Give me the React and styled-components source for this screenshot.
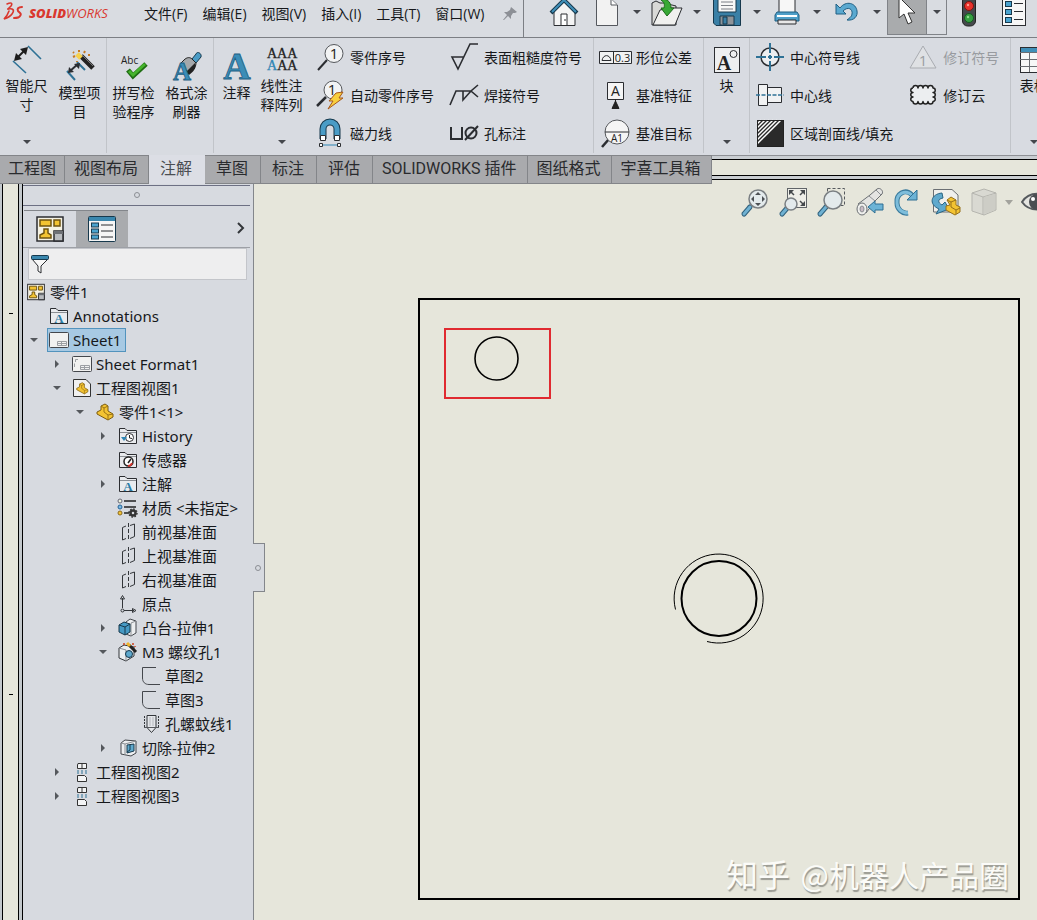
import React from 'react'
import styled, { createGlobalStyle } from 'styled-components'

const INK = '#2b2d31'
const BLUE = '#3f8fb8'
const DEEP = '#1f5f83'
const GOLD = '#f3c332'
const SERIF = 'Liberation Serif, serif'
const SANS = 'Open Sans, sans-serif'

// ---------- title bar icons ----------

const Swoosh = () => (
  <Svg width='22' height='20' viewBox='0 0 22 20' fill='none' stroke='#d9382f' strokeLinecap='round'>
    <path d='M3 1C7-1 9 0 7 3L4 6' strokeWidth='1.600' />
    <path d='M4 6C9 5 11 7 8 11C6 14 3 15 0 16C3 13 4 11 5 8' strokeWidth='1.600' />
    <path d='M18 4C14 4 13 6 14 8C16 10 18 11 16 13C15 15 13 15 10 15' strokeWidth='2' />
  </Svg>
)
const PinIcon = () => (
  <Svg width='14' height='14' viewBox='0 0 14 14'>
    <path d='M8 0l6 5l-2 1l-2 0l-2 3l0 3l-3-3l-4 4l-1 0l4-5l-3-3l3 0l3-2z' fill='#8d9096' />
  </Svg>
)
const HomeIcon = () => (
  <Svg width='28' height='28' viewBox='0 0 28 28'>
    <path d='M4 12L14 2L25 12V25.500H4z' fill='#f4f4f4' stroke={INK} />
    <path d='M1 13L14 0L27 13' fill='none' stroke='#17394d' strokeWidth='4' />
    <path d='M2 12L14 0L26 12' fill='none' stroke={BLUE} strokeWidth='2' />
    <path d='M11 25V14h6v11' fill='#fff' stroke={INK} />
    <path d='M15 19v2' stroke={INK} />
  </Svg>
)
const NewIcon = () => (
  <Svg width='28' height='28' viewBox='0 0 28 28'>
    <path d='M3.500 -4V25.500H24.500V5L18 -1z' fill='#f2f2f2' stroke='#55585e' />
    <path d='M18 -1V5H24' fill='#fff' stroke='#55585e' />
  </Svg>
)
const OpenIcon = () => (
  <Svg width='32' height='28' viewBox='0 0 32 28'>
    <path d='M1 25V3L5 1L9 3H13L25 6V25z' fill='#d9d9d7' stroke={INK} />
    <path d='M2 25L9 10L18 8H31L24 25z' fill='#f1f1ef' stroke={INK} />
    <path d='M10 0C15-2 20 1 20 8H23L16 16L10 8H13C14 4 13 2 10 0z' fill='#39a935' stroke='#1d6a1b' />
  </Svg>
)
const SaveIcon = () => (
  <Svg width='28' height='28' viewBox='0 0 28 28'>
    <path d='M.5 -4H27.500V25.500H3L.5 23z' fill='#3a80a6' stroke='#17394d' />
    <path d='M5 -3H23V12H5z' fill='#f7f7f7' stroke='#17394d' />
    <path d='M8 2H20M8 5.500H20M8 9H20' stroke='#7b7f86' />
    <path d='M7 16H21V25H7z' fill='#8f9499' stroke='#17394d' />
    <path d='M10 17H14V24H10z' fill='#3a80a6' stroke='#17394d' />
  </Svg>
)
const PrintIcon = () => (
  <Svg width='26' height='28' viewBox='0 0 26 28'>
    <path d='M5 -2H21V13H5z' fill='#f7f7f7' stroke={INK} />
    <path d='M3 12H23L25 15V21H1V15z' fill='#4f9fc8' stroke={DEEP} />
    <path d='M3 16H23' stroke='#fff' strokeWidth='2' />
    <path d='M4 20H22V24H4z' fill='#e8e8e8' stroke={INK} />
  </Svg>
)
const UndoIcon = () => (
  <Svg width='24' height='28' viewBox='0 0 24 28'>
    <path d='M1 4V14H11L8 11C13 6 18 9 17 14C17 17 14 18 12 20C19 21 23 16 22 11C21 3 11 0 5 8z' fill='#5aa9d0' stroke={DEEP} />
  </Svg>
)
const CursorIcon = () => (
  <Svg width='20' height='28' viewBox='0 0 20 28'>
    <path d='M2 -3V18L7 14L11 24L15 22L11 13H18z' fill='#fff' stroke='#333' />
  </Svg>
)
const TrafficIcon = () => (
  <Svg width='14' height='28' viewBox='0 0 14 28'>
    <rect x='.5' y='-4' width='13' height='30' rx='5' fill='#45494c' stroke='#222' />
    <circle cx='7' cy='6' r='4.500' fill='#e8322b' stroke='#7d1410' />
    <circle cx='7' cy='18' r='4.500' fill='#36a042' stroke='#155a1e' />
    <circle cx='6' cy='5' r='1.200' fill='#ff9b8c' />
    <circle cx='6' cy='17' r='1.200' fill='#8fe08f' />
  </Svg>
)
const OptionsIcon = () => (
  <Svg width='24' height='28' viewBox='0 0 24 28'>
    <rect x='.5' y='-4' width='23' height='29.500' fill='#f7f7f7' stroke={INK} />
    {[1.5, 9.5, 17.5].map(y => (
      <g key={y}>
        <rect x='3.500' y={y} width='6' height='5' fill='#4aa3cf' stroke='#17394d' />
        <path d={`M12 ${y + 2}h9`} stroke={INK} />
      </g>
    ))}
  </Svg>
)

// ---------- ribbon icons ----------

const SmartDimIcon = () => (
  <Svg width='30' height='30' viewBox='0 0 30 30' fill='none'>
    <path d='M16 2L29 15M1 17L14 29' stroke='#2f7296' strokeWidth='1.600' />
    <path d='M4 15L14 5' stroke='#1d1d1d' strokeWidth='2' />
    <path d='M2 17L4 9L10 15zM16 3L8 5L14 11z' fill='#1d1d1d' />
  </Svg>
)
const ModelItemsIcon = () => (
  <Svg width='30' height='30' viewBox='0 0 30 30' fill='none'>
    <path d='M12 11L20 19M2 20L10 29' stroke='#2f7296' strokeWidth='2' />
    <path d='M5 20L13 13' stroke={INK} strokeWidth='2' />
    <path d='M3 22L4 16L9 21zM15 12L9 13L14 18z' fill={INK} />
    <path d='M16 5L28 17' stroke='#222' strokeWidth='5' />
    <path d='M17 4L28 15' stroke='#777' strokeWidth='1' />
    <path d='M12 3L16 7' stroke='#f6d04a' strokeWidth='5' />
    <path d='M14 -1v2M20 0l-1 2M8 1l1 1M8 6l2-1M23 4h2M12 11v-1' stroke='#c87a20' strokeWidth='2' />
  </Svg>
)
const SpellIcon = () => (
  <Svg width='30' height='30' viewBox='0 0 30 30'>
    <text x='2' y='13' fontFamily={SANS} fontSize='10' fill='#222'>Abc</text>
    <path d='M9 19L14 25L27 13' fill='none' stroke='#1f6d12' strokeWidth='5' />
    <path d='M10 20L14 24L26 13' fill='none' stroke='#45b32c' strokeWidth='3' />
  </Svg>
)
const PainterIcon = () => (
  <Svg width='30' height='30' viewBox='0 0 30 30'>
    <path d='M20 8L24 3C25 0 30 2 29 6L24 12z' fill='#4a9cc6' stroke='#17394d' />
    <path d='M12 9C15 6 18 6 20 8L24 12C24 17 20 20 17 22L8 13z' fill='#a5a8ab' stroke='#222' />
    <path d='M14 21L23 12C25 17 21 21 17 24z' fill='#222' />
    <text x='1' y='29' fontFamily={SERIF} fontSize='25' fontWeight='bold' fill='#3b8db7' stroke={DEEP} strokeWidth='.8'>A</text>
  </Svg>
)
const NoteIcon = () => (
  <Svg width='30' height='30' viewBox='0 0 30 30'>
    <text x='15' y='28' textAnchor='middle' fontFamily={SERIF} fontSize='38' fontWeight='bold' fill='#3b8db7' stroke={DEEP} strokeWidth='.8'>A</text>
  </Svg>
)
const PatternIcon = () => (
  <Svg width='30' height='30' viewBox='0 0 30 30' fontFamily={SERIF} fontSize='14' fill='#222' stroke='#222' strokeWidth='.3'>
    <text x='0' y='14'>AAA</text>
    <text x='0' y='26'><tspan fill='#2f86b5' stroke='#2f86b5'>A</tspan>AA</text>
  </Svg>
)
const BalloonIcon = () => (
  <Svg width='28' height='28' viewBox='0 0 28 28'>
    <path d='M11 17L2 27' stroke={INK} strokeWidth='2' />
    <circle cx='18' cy='10.500' r='9' fill='#f2f3f4' stroke='#55585c' />
    <text x='18' y='16' textAnchor='middle' fontFamily={SANS} fontSize='15' fill='#222'>1</text>
  </Svg>
)
const AutoBalloonIcon = () => (
  <Svg width='28' height='28' viewBox='0 0 28 28'>
    <path d='M10 16L1 25' stroke={INK} strokeWidth='2.500' />
    <circle cx='17' cy='9' r='9' fill='#f2f3f4' stroke='#55585c' />
    <text x='16' y='14' textAnchor='middle' fontFamily={SANS} fontSize='15' fill='#222'>1</text>
    <path d='M20 12L27 11L23 17L27 17L12 28L17 20L13 20z' fill='#f8cf3d' stroke='#a8581c' />
  </Svg>
)
const MagnetIcon = () => (
  <Svg width='28' height='28' viewBox='0 0 28 28' fill='none'>
    <path d='M7 20V10a7 7 0 0 1 14 0V20' stroke='#17394d' strokeWidth='7' />
    <path d='M7 19V10a7 7 0 0 1 14 0V19' stroke='#4a9cc6' strokeWidth='5' />
    <path d='M4.500 16.500h5v5h-5zM18.500 16.500h5v5h-5z' fill='#fff' stroke={INK} />
    <path d='M5 26H23' stroke='#2f86b5' />
    <path d='M3.500 24.500h3v3h-3zM21.500 24.500h3v3h-3z' fill='#fff' stroke={INK} />
  </Svg>
)
const SurfaceIcon = () => (
  <Svg width='28' height='28' viewBox='0 0 28 28' fill='none' stroke={INK} strokeWidth='1.600'>
    <path d='M14 14H2L8 26L20 1H28' />
  </Svg>
)
const WeldIcon = () => (
  <Svg width='28' height='28' viewBox='0 0 28 28' fill='none' stroke={INK} strokeWidth='1.600'>
    <path d='M0 24L6 10H22M28 4L21 10L28 16M13 10V19L21 10' />
  </Svg>
)
const HoleIcon = () => (
  <Svg width='28' height='28' viewBox='0 0 28 28' fill='none' stroke={INK} strokeWidth='2'>
    <path d='M1 8V20H12V8M15 21L28 7' />
    <circle cx='21' cy='14' r='5.500' />
  </Svg>
)
const ToleranceIcon = () => (
  <Svg width='30' height='28' viewBox='0 0 30 28'>
    <path d='M-.5 8.500H31.500V20.500H-.5zM13.500 8.500V20.500' fill='#f1f2f3' stroke={INK} />
    <path d='M2 17.500H11C10 11 3 11 2 17.500z' fill='none' stroke={INK} />
    <text x='22.500' y='18.500' textAnchor='middle' fontFamily={SANS} fontSize='11' fill='#222'>0.3</text>
  </Svg>
)
const DatumIcon = () => (
  <Svg width='30' height='28' viewBox='0 0 30 28'>
    <path d='M7.500 1.500H23.500V18.500H7.500z' fill='#f5f5f5' stroke={INK} />
    <text x='15.500' y='15' textAnchor='middle' fontFamily={SANS} fontSize='14' fill='#222'>A</text>
    <path d='M15.500 18V21M15.500 20L12 27.500H19z' fill='#222' stroke='#222' />
  </Svg>
)
const TargetIcon = () => (
  <Svg width='30' height='28' viewBox='0 0 30 28'>
    <path d='M9 20L2 28' stroke={INK} strokeWidth='2.500' />
    <circle cx='17' cy='13' r='12' fill='#f5f5f5' stroke='#55585c' />
    <path d='M5 13H29' stroke={INK} />
    <text x='17' y='23' textAnchor='middle' fontFamily={SANS} fontSize='10' fill='#222'>A1</text>
  </Svg>
)
const BlockIcon = () => (
  <Svg width='28' height='30' viewBox='0 0 28 30'>
    <rect x='1.500' y='3.500' width='25' height='25' fill='#eeeff0' stroke={INK} />
    <text x='11' y='26' textAnchor='middle' fontFamily={SERIF} fontSize='20' fontWeight='bold' fill='#222'>A</text>
    <circle cx='20.500' cy='10' r='3.500' fill='none' stroke={INK} />
  </Svg>
)
const CenterMarkIcon = () => (
  <Svg width='28' height='28' viewBox='0 0 28 28' fill='none'>
    <circle cx='14' cy='14' r='9' fill='#eceef0' stroke={INK} strokeWidth='1.500' />
    <path d='M14 0V10M14 18V28M0 14H10M18 14H28M12 14H16M14 12V16' stroke='#2f7296' strokeWidth='2' />
  </Svg>
)
const CenterLineIcon = () => (
  <Svg width='28' height='28' viewBox='0 0 28 28'>
    <path d='M2.500 3.500H11.500V24.500H2.500zM11.500 6.500H25.500V21.500H11.500z' fill='#f1f2f3' stroke={INK} />
    <path d='M0 14H28' stroke='#2f7296' strokeWidth='1.500' strokeDasharray='4 1.500' />
  </Svg>
)
const HatchIcon = () => (
  <Svg width='28' height='28' viewBox='0 0 28 28'>
    <rect x='1' y='1' width='27' height='27' fill='#2a2a2a' />
    <path d='M1 5L5 1M1 9L9 1M1 13L13 1M1 17L17 1M1 21L21 1M1 25L25 1' stroke='#fff' strokeWidth='1.500' />
    <rect x='1.500' y='1.500' width='26' height='26' fill='none' stroke='#222' />
  </Svg>
)
const RevSymbolIcon = () => (
  <Svg width='28' height='28' viewBox='0 0 28 28'>
    <path d='M14 3L27 25H1z' fill='#dfe1e4' stroke='#a9acb1' />
    <text x='14' y='23' textAnchor='middle' fontFamily={SANS} fontSize='15' fill='#9b9ea3'>1</text>
  </Svg>
)
const CloudIcon = () => (
  <Svg width='28' height='28' viewBox='0 0 28 28'>
    <path
      d={'M4 7' + 'a2.500 2.500 0 0 1 5 0'.repeat(4) + 'a2 2 0 0 1 0 4.500'.repeat(3) + 'a2.500 2.500 0 0 1 -5 0'.repeat(4) + 'a2 2 0 0 1 0 -4.500'.repeat(3)}
      fill='#eceef0' stroke='#222' strokeWidth='1.500' strokeLinejoin='round'
    />
  </Svg>
)
const TableIcon = () => (
  <Svg width='28' height='30' viewBox='0 0 28 30'>
    <rect x='.5' y='3.500' width='27' height='25' fill='#f7f7f7' stroke={INK} />
    <rect x='1' y='4' width='26' height='4' fill='#3f8fb8' />
    <path d='M0 8.500H28M0 15.500H28M0 22.500H28M9.500 8V28M18.500 8V28' stroke='#6b6e73' />
  </Svg>
)

// ---------- view toolbar icons ----------

const Lens = ({ x, y, r }) => (
  <g>
    <path d={`M${x - r + 1} ${y + r - 1}L9 19`} stroke='#7a7f83' strokeWidth='2' />
    <path d='M9 19L3 26' stroke='#2e5f7b' strokeWidth='5' strokeLinecap='round' />
    <path d='M9 19L3 26' stroke='#6fb1d2' strokeWidth='3' strokeLinecap='round' />
    <circle cx={x} cy={y} r={r} fill='#e3eaec' stroke='#7a7f83' strokeWidth='1.500' />
  </g>
)
const ZoomPanIcon = () => (
  <Svg width='28' height='28' viewBox='0 0 28 28'>
    <Lens x={17} y={11} r={9} />
    <path d='M17 4l3 3h-6zM17 18l3-3h-6zM10 11l3-3v6zM24 11l-3-3v6z' fill='#4c5054' />
  </Svg>
)
const ZoomFitIcon = () => (
  <Svg width='28' height='28' viewBox='0 0 28 28'>
    <rect x='8.500' y='.5' width='19' height='19' fill='#eeeee8' stroke='#606468' />
    <path d='M11 3L15 7M25 3L21 7M25 17L21 13' stroke='#44484c' strokeWidth='1.500' />
    <path d='M10 2h5l-5 5zM26 2h-5l5 5zM26 18h-5l5-5z' fill='#44484c' />
    <Lens x={12} y={16} r={6} />
  </Svg>
)
const ZoomAreaIcon = () => (
  <Svg width='28' height='28' viewBox='0 0 28 28'>
    <rect x='10.500' y='.5' width='17' height='17' fill='none' stroke='#55595d' strokeDasharray='3 2' />
    <Lens x={16} y={12} r={9} />
  </Svg>
)
const PrevViewIcon = () => (
  <Svg width='30' height='28' viewBox='0 0 30 28'>
    <path d='M3 16L15 7L22 1C25-1 29 3 27 6L20 13L11 25z' fill='#e4e4e2' stroke='#6b6f73' />
    <path d='M14 8L20 13M21 2L26 7' stroke='#8b8f93' />
    <ellipse cx='7' cy='21' rx='5' ry='6' fill='#efefed' stroke='#6b6f73' />
    <ellipse cx='7' cy='21' rx='2' ry='3' fill='#c8b9c4' stroke='#8b8f93' />
    <path d='M13 19L20 13V16H28V22H20V25z' fill='#6cb3d6' stroke='#2e6f93' />
  </Svg>
)
const RotateIcon = () => (
  <Svg width='26' height='28' viewBox='0 0 26 28' fill='none'>
    <path d='M19 7C12 0 3 6 4 15C4 21 9 26 15 25' stroke='#3a7b9d' strokeWidth='5' />
    <path d='M20 8C12 0 3 6 4 15C4 21 9 25 15 25' stroke='#7dbddb' strokeWidth='3' />
    <path d='M24 2V12H14z' fill='#6cb3d6' stroke='#2e6f93' />
  </Svg>
)
const UpdateViewIcon = () => (
  <Svg width='30' height='28' viewBox='0 0 30 28'>
    <path d='M2.500 1.500H21L27 7V24H2.500z' fill='#efefec' stroke='#6b6f73' />
    <path d='M11 5C0 6-3 16 8 21L5 26L18 21L14 14L11 17C7 15 6 11 12 10z' fill='#5fa9cd' stroke='#2b6584' />
    <path d='M16 12L20 9L25 12V17L29 19V24L24 27L15 22V18L19 17z' fill={GOLD} stroke='#96701a' />
    <path d='M20 14V19L25 22L29 20M25 22V26M16 12L20 14L25 12' fill='none' stroke='#96701a' />
  </Svg>
)
const CubeIcon = () => (
  <Svg width='28' height='28' viewBox='0 0 28 28'>
    <path d='M3 5L15 1L27 5V22L15 27L3 23z' fill='#d9d9d2' stroke='#b5b5af' />
    <path d='M3 5L14 9L27 5M14 9V27' fill='none' stroke='#b5b5af' />
    <path d='M15 9L26 6V22L15 26z' fill='#cdcdc6' />
  </Svg>
)
const EyeIcon = () => (
  <Svg width='32' height='28' viewBox='0 0 32 28'>
    <path d='M1 14C8 3 24 3 31 14C24 24 8 24 1 14z' fill='#e4e4e0' stroke='#55595d' strokeWidth='2' />
    <circle cx='16' cy='14' r='8' fill='#4a4d51' />
    <circle cx='12' cy='11' r='2' fill='#fff' />
  </Svg>
)

// ---------- feature tree icons ----------

const DrawingGlyph = ({ size = 18 }) => (
  <Svg width={size} height={size} viewBox='0 0 28 26'>
    <rect x='1' y='1' width='26' height='24' fill='#f5f2e4' stroke={INK} strokeWidth='1.500' />
    <path d='M4 4H15V10H4zM18 4H24V10H18zM8 13H12V17L15 19V22H4V19L8 17z' fill={GOLD} stroke='#6d5310' strokeWidth='1.500' />
    <path d='M18 25V15H27V25z' fill='#b9bcc0' stroke={INK} strokeWidth='1.500' />
    <path d='M18 16.500H27' stroke='#6d7075' strokeWidth='3' />
  </Svg>
)
const PropertyGlyph = () => (
  <Svg width='28' height='26' viewBox='0 0 28 26'>
    <rect x='.5' y='.5' width='27' height='25' rx='1' fill='#f5f5f5' stroke='#17394d' />
    <rect x='1' y='1' width='26' height='4' fill='#3a87ae' />
    {[7, 13, 19].map(y => (
      <g key={y}>
        <rect x='3.500' y={y} width='7' height='4' fill='#4aa3cf' stroke='#17394d' />
        <path d={`M13 ${y + 2}h12`} stroke={INK} />
      </g>
    ))}
  </Svg>
)
const FunnelIcon = () => (
  <Svg width='18' height='19' viewBox='0 0 18 19'>
    <path d='M1 4L7 11V16L10 18V11L17 4z' fill='#f7f7f7' stroke={INK} />
    <rect x='.5' y='.5' width='17' height='4' rx='1' fill='#3a87ae' stroke='#17394d' />
  </Svg>
)
const Folder = ({ children }) => (
  <Svg width='18' height='18' viewBox='0 0 18 18'>
    <path d='M.5 16.500V1.500H6L8 3.500H17.500V16.500z' fill='#e9ebee' stroke={INK} />
    <path d='M1 5.500H17' stroke='#8b8f94' />
    {children}
  </Svg>
)
const AnnotationGlyph = () => (
  <Folder><text x='9' y='15.500' textAnchor='middle' fontFamily={SERIF} fontSize='13' fontWeight='bold' fill='#2b7ca6'>A</text></Folder>
)
const HistoryGlyph = () => (
  <Folder>
    <circle cx='10.500' cy='10.500' r='4' fill='#fff' stroke='#2b2d31' />
    <path d='M10.500 8V11L13 11.500' fill='none' stroke='#222' />
    <path d='M2 10h6l-3 4z' fill='#2f86b5' />
  </Folder>
)
const SensorGlyph = () => (
  <Folder>
    <circle cx='9.500' cy='10.500' r='4.500' fill='#fff' stroke='#222' strokeWidth='1.500' />
    <path d='M9 12L12 8' stroke='#222' strokeWidth='1.500' />
    <path d='M9 15a4.500 4.500 0 0 0 4-3' fill='none' stroke='#d2332b' strokeWidth='2' />
  </Folder>
)
const SheetGlyph = () => (
  <Svg width='20' height='18' viewBox='0 0 20 18'>
    <rect x='.5' y='1.500' width='19' height='15' rx='1' fill='#f1f1f0' stroke='#44474c' />
    <path d='M8.500 14.500V10.500H17.500V14.500zM8.500 12.500H17M12.500 10.500V14' fill='none' stroke='#9c9fa3' />
  </Svg>
)
const FormatGlyph = () => (
  <Svg width='20' height='18' viewBox='0 0 20 18'>
    <rect x='.5' y='1.500' width='19' height='15' rx='1' fill='#f1f1f0' stroke='#44474c' />
    <path d='M3.500 7V4.500H6M2.500 12V8.500M8.500 14.500V10.500H17.500V14.500zM8.500 12.500H17M12.500 10.500V14' fill='none' stroke='#9c9fa3' />
  </Svg>
)
const PartShape = () => (
  <g>
    <path d='M1 9L5 7V3L9 1L12 3V8L17 11V14L12 17L1 11z' fill={GOLD} stroke='#7c5c10' />
    <path d='M5 3L8 5L12 3M8 5V9L12 12L17 11M12 12V17' fill='none' stroke='#9c7515' />
  </g>
)
const PartGlyph = () => (
  <Svg width='18' height='18' viewBox='0 0 18 18'><PartShape /></Svg>
)
const ViewGlyph = () => (
  <Svg width='18' height='18' viewBox='0 0 18 18'>
    <path d='M.5 .5H13L17.500 5V17.500H.5z' fill='#f1f1f0' stroke='#333' />
    <g transform='translate(3 3) scale(.7)'><PartShape /></g>
  </Svg>
)
const MaterialGlyph = () => (
  <Svg width='20' height='18' viewBox='0 0 20 18'>
    <path d='M6 2H18M6 8H18M6 14H11' stroke='#222' strokeWidth='1.500' />
    <circle cx='2' cy='2' r='2' fill='#eef3dc' stroke='#667' />
    <circle cx='2' cy='8' r='2' fill='#7cb9e0' stroke='#24649a' />
    <circle cx='2' cy='14' r='2' fill={GOLD} stroke='#8a6a20' />
    <circle cx='15' cy='14' r='2.500' fill='none' stroke='#333' strokeWidth='2.500' />
    <circle cx='15' cy='14' r='4' fill='none' stroke='#333' strokeWidth='1.500' strokeDasharray='1.500 1.600' />
  </Svg>
)
const PlaneGlyph = () => (
  <Svg width='18' height='18' viewBox='0 0 18 18' fill='none' stroke='#33363a'>
    <path d='M7 3L3.500 4.500V17L7 15.500M11 2.500L15.500 1V13.500L11 15.500' />
    <path d='M9.500 0V18' strokeDasharray='4 2' />
  </Svg>
)
const OriginGlyph = () => (
  <Svg width='18' height='18' viewBox='0 0 18 18' fill='none' stroke='#33363a'>
    <path d='M3.500 3V13M5 15.500H15M1.500 4L3.500 .5L5.500 4zM13.500 13.500L17 15.500L13.500 17.500z' />
    <circle cx='3.500' cy='15.500' r='1.500' />
  </Svg>
)
const BossGlyph = () => (
  <Svg width='20' height='18' viewBox='0 0 20 18'>
    <path d='M8 3L12 0L18 2V14L13 17L8 15z' fill='#eceef0' stroke='#44474c' />
    <path d='M13 4V17M13 4L18 2' stroke='#8b8f94' />
    <path d='M1 6L6 3L12 5V13L7 16L1 13z' fill='#4599c4' stroke='#17394d' />
    <path d='M1 6L7 8L12 5M7 8V16' fill='none' stroke='#17394d' />
  </Svg>
)
const HoleWizGlyph = () => (
  <Svg width='20' height='18' viewBox='0 0 20 18'>
    <path d='M1 5L6 2L16 4V13L8 18L1 15z' fill='#eceef0' stroke='#33363a' />
    <path d='M1 5L8 7V18' fill='none' stroke='#8b8f94' />
    <circle cx='11' cy='11' r='3.500' fill='#5fa9cd' stroke='#17394d' />
    <path d='M11 2L18 9' stroke='#222' strokeWidth='3' />
    <path d='M9 0L12 3' stroke='#f0b52c' strokeWidth='3' />
    <path d='M14 1h2M6 0v2M17 3v1' stroke='#d0401e' strokeWidth='1.500' />
  </Svg>
)
const SketchGlyph = () => (
  <Svg width='18' height='18' viewBox='0 0 18 18' fill='none' stroke='#44474c'>
    <path d='M14 .5H.5V11C.5 15 3 17.500 7 17.500H18' />
  </Svg>
)
const ThreadGlyph = () => (
  <Svg width='18' height='18' viewBox='0 0 18 18' fill='none' stroke='#33363a'>
    <path d='M5 .5H14V12.500H5zM5 12.500L9.500 17.500L14 12.500' fill='#e4e6ea' />
    <path d='M2.500 1V12M16.500 1V12' strokeDasharray='2 1' />
    <path d='M2 12.500H17' stroke='#55585d' />
    <path d='M8 2V11M11 2V11' stroke='#b5b8bd' />
  </Svg>
)
const CutGlyph = () => (
  <Svg width='18' height='18' viewBox='0 0 18 18'>
    <path d='M2 4L6 1L17 2V14L12 17L2 15z' fill='#eceef0' stroke='#44474c' />
    <path d='M2 4L6 5V16M6 5L17 2' fill='none' stroke='#8b8f94' />
    <path d='M8 6L15 5V12L8 14z' fill='#5fa9cd' stroke='#17394d' />
    <path d='M11 6V11L8 13' fill='none' stroke='#17394d' />
  </Svg>
)
const ProjectedGlyph = () => (
  <Svg width='18' height='18' viewBox='0 0 18 18' fill='#f3f4f5' stroke='#333'>
    <path d='M5 .5H13.500V5.500H4.500V2zM9 .5V5M4.500 12.500H11.500L13.500 14.500V18.500H4.500z' />
    <path d='M4 8H6M8 8H10M12 8H14M4 10H6M8 10H10M12 10H14' stroke='#2f7296' />
  </Svg>
)

const Caret = () => (
  <Svg width='8' height='4' viewBox='0 0 8 4'><path d='M0 0H8L4 4z' fill='#44474c' /></Svg>
)
const Twisty = ({ open }) => (
  <Svg width='10' height='10' viewBox='0 0 10 10'>
    <path d={open ? 'M1 3H9L5 7z' : 'M3 1V9L7 5z'} fill='#55585d' />
  </Svg>
)

// ---------- data ----------

const menus = ['文件(F)', '编辑(E)', '视图(V)', '插入(I)', '工具(T)', '窗口(W)']

const quick = [
  { name: '新建', icon: NewIcon },
  { name: '打开', icon: OpenIcon },
  { name: '保存', icon: SaveIcon },
  { name: '打印', icon: PrintIcon },
  { name: '撤销', icon: UndoIcon }
]

const tabs = ['工程图', '视图布局', '注解', '草图', '标注', '评估', 'SOLIDWORKS 插件', '图纸格式', '宇喜工具箱']

const tree = [
  { level: 0, icon: DrawingGlyph, label: '零件1' },
  { level: 1, icon: AnnotationGlyph, label: 'Annotations' },
  { level: 1, icon: SheetGlyph, label: 'Sheet1', open: true, selected: true },
  { level: 2, icon: FormatGlyph, label: 'Sheet Format1', open: false },
  { level: 2, icon: ViewGlyph, label: '工程图视图1', open: true },
  { level: 3, icon: PartGlyph, label: '零件1<1>', open: true },
  { level: 4, icon: HistoryGlyph, label: 'History', open: false },
  { level: 4, icon: SensorGlyph, label: '传感器' },
  { level: 4, icon: AnnotationGlyph, label: '注解', open: false },
  { level: 4, icon: MaterialGlyph, label: '材质 <未指定>' },
  { level: 4, icon: PlaneGlyph, label: '前视基准面' },
  { level: 4, icon: PlaneGlyph, label: '上视基准面' },
  { level: 4, icon: PlaneGlyph, label: '右视基准面' },
  { level: 4, icon: OriginGlyph, label: '原点' },
  { level: 4, icon: BossGlyph, label: '凸台-拉伸1', open: false },
  { level: 4, icon: HoleWizGlyph, label: 'M3 螺纹孔1', open: true },
  { level: 5, icon: SketchGlyph, label: '草图2' },
  { level: 5, icon: SketchGlyph, label: '草图3' },
  { level: 5, icon: ThreadGlyph, label: '孔螺蚊线1' },
  { level: 4, icon: CutGlyph, label: '切除-拉伸2', open: false },
  { level: 2, icon: ProjectedGlyph, label: '工程图视图2', open: false },
  { level: 2, icon: ProjectedGlyph, label: '工程图视图3', open: false }
]

// ---------- parts ----------

const Big = ({ icon: Icon, lines, caret, narrow }) => (
  <BigButton type='button' $high={caret} $narrow={narrow}>
    <Icon />
    <BigLabel>{lines.map(line => <span key={line}>{line}</span>)}</BigLabel>
    {caret && <CaretSlot><Caret /></CaretSlot>}
  </BigButton>
)

const Small = ({ icon: Icon, wide, disabled, children }) => (
  <SmallButton type='button' disabled={disabled}>
    <IconSlot $wide={wide}><Icon /></IconSlot>
    {children}
  </SmallButton>
)

const TitleBar = () => (
  <Title>
    <MenuArea>
      <Logo><Swoosh /><Brand><b>SOLID</b>WORKS</Brand></Logo>
      <Menu>
        {menus.map(m => <MenuItem type='button' key={m}>{m}</MenuItem>)}
      </Menu>
      <PinIcon />
    </MenuArea>
    <Quick>
      <QuickButton type='button' aria-label='主页' $w={46}><HomeIcon /></QuickButton>
      {quick.map(({ name, icon: Icon }) => (
        <React.Fragment key={name}>
          <QuickButton type='button' aria-label={name} $w={40}><Icon /></QuickButton>
          <QuickCaret type='button' aria-label={`${name}选项`}><Caret /></QuickCaret>
        </React.Fragment>
      ))}
      <QuickButton type='button' aria-label='选择' $w={40} $pressed><CursorIcon /></QuickButton>
      <QuickCaret type='button' aria-label='选择选项' $framed><Caret /></QuickCaret>
      <QuickButton type='button' aria-label='重建模型' $w={44}><TrafficIcon /></QuickButton>
      <QuickButton type='button' aria-label='选项' $w={46}><OptionsIcon /></QuickButton>
    </Quick>
  </Title>
)

const Ribbon = () => (
  <RibbonBar>
    <Group>
      <Big icon={SmartDimIcon} lines={['智能尺', '寸']} caret />
      <Big icon={ModelItemsIcon} lines={['模型项', '目']} />
    </Group>
    <Group>
      <Big icon={SpellIcon} lines={['拼写检', '验程序']} />
      <Big icon={PainterIcon} lines={['格式涂', '刷器']} />
    </Group>
    <Group>
      <Big icon={NoteIcon} lines={['注释']} narrow />
      <Big icon={PatternIcon} lines={['线性注', '释阵列']} caret narrow />
      <Stacks>
        <Stack>
          <Small icon={BalloonIcon}>零件序号</Small>
          <Small icon={AutoBalloonIcon}>自动零件序号</Small>
          <Small icon={MagnetIcon}>磁力线</Small>
        </Stack>
        <Stack>
          <Small icon={SurfaceIcon}>表面粗糙度符号</Small>
          <Small icon={WeldIcon}>焊接符号</Small>
          <Small icon={HoleIcon}>孔标注</Small>
        </Stack>
      </Stacks>
    </Group>
    <Group>
      <Stacks>
        <Stack>
          <Small icon={ToleranceIcon} wide>形位公差</Small>
          <Small icon={DatumIcon} wide>基准特征</Small>
          <Small icon={TargetIcon} wide>基准目标</Small>
        </Stack>
      </Stacks>
    </Group>
    <Group>
      <Big icon={BlockIcon} lines={['块']} caret narrow />
    </Group>
    <Group>
      <Stacks>
        <Stack>
          <Small icon={CenterMarkIcon}>中心符号线</Small>
          <Small icon={CenterLineIcon}>中心线</Small>
          <Small icon={HatchIcon}>区域剖面线/填充</Small>
        </Stack>
        <Stack>
          <Small icon={RevSymbolIcon} disabled>修订符号</Small>
          <Small icon={CloudIcon}>修订云</Small>
        </Stack>
      </Stacks>
    </Group>
    <Group>
      <Big icon={TableIcon} lines={['表格']} caret narrow />
    </Group>
  </RibbonBar>
)

const FeaturePanel = () => (
  <Panel>
    <Grip><Dot /></Grip>
    <PanelTabs>
      <PanelTab type='button' aria-label='FeatureManager'><DrawingGlyph size={28} /></PanelTab>
      <PanelTab type='button' aria-label='PropertyManager' $active><PropertyGlyph /></PanelTab>
      <Expand type='button' aria-label='展开'>
        <Svg width='8' height='12' viewBox='0 0 8 12'><path d='M1 1L6 6L1 11' fill='none' stroke='#33363a' strokeWidth='2' /></Svg>
      </Expand>
    </PanelTabs>
    <Filter>
      <FunnelIcon />
      <FilterInput type='text' aria-label='过滤器' />
    </Filter>
    <Tree>
      {tree.map(({ level, icon: Icon, label, open, selected }, i) => (
        <Row key={i} $level={level}>
          {level > 0 && <Arrow>{open !== undefined && <Twisty open={open} />}</Arrow>}
          <Node type='button' $selected={selected}>
            <NodeIcon><Icon /></NodeIcon>
            {label}
          </Node>
        </Row>
      ))}
    </Tree>
    <SideHandle><Dot /></SideHandle>
  </Panel>
)

const DrawingArea = () => (
  <Canvas>
    <ViewTools>
      <ToolButton type='button' aria-label='平移缩放'><ZoomPanIcon /></ToolButton>
      <ToolButton type='button' aria-label='整屏显示全图'><ZoomFitIcon /></ToolButton>
      <ToolButton type='button' aria-label='局部放大'><ZoomAreaIcon /></ToolButton>
      <ToolButton type='button' aria-label='上一视图'><PrevViewIcon /></ToolButton>
      <ToolButton type='button' aria-label='旋转视图'><RotateIcon /></ToolButton>
      <ToolButton type='button' aria-label='更新视图'><UpdateViewIcon /></ToolButton>
      <ToolButton type='button' aria-label='显示样式'><CubeIcon /></ToolButton>
      <StyleCaret><Svg width='8' height='5' viewBox='0 0 8 5'><path d='M0 0H8L4 5z' fill='#a3a39d' /></Svg></StyleCaret>
      <ToolButton type='button' aria-label='隐藏/显示项目' $clip><EyeIcon /></ToolButton>
    </ViewTools>
    <Sheet viewBox='0 0 602 602' fill='none' stroke='#000'>
      <rect x='1' y='1' width='600' height='600' strokeWidth='2' />
      <rect x='27' y='31' width='105' height='69' stroke='#e02a30' strokeWidth='2' />
      <circle cx='78.500' cy='60.500' r='21.500' strokeWidth='1.600' />
      <circle cx='301' cy='300.500' r='37.500' strokeWidth='2' />
      <path d='M257.500 311.500A44.500 44.500 0 1 1 289 343.500' />
    </Sheet>
    <Watermark><span>知乎</span> @机器人产品圈</Watermark>
  </Canvas>
)

class App extends React.Component {
  constructor (props) {
    super(props)
    this.state = { tab: '注解' }
  }
  render () {
    const { tab } = this.state
    return (
      <Page>
        <GlobalStyle />
        <TitleBar />
        <Ribbon />
        <TabLine>
          <Tabs role='tablist'>
            {tabs.map(t => (
              <Tab
                type='button' role='tab' key={t}
                aria-selected={t === tab} $active={t === tab}
                onClick={() => { this.setState({ tab: t }) }}
              >
                {t}
              </Tab>
            ))}
          </Tabs>
          <TopRuler><RulerBand /></TopRuler>
        </TabLine>
        <Main>
          <SideRuler><Tick /><Tick /></SideRuler>
          <FeaturePanel />
          <DrawingArea />
        </Main>
      </Page>
    )
  }
}

// ---------- styles ----------

const GlobalStyle = createGlobalStyle`
  * {
    box-sizing: border-box;
  }
  body {
    margin: 0;
    color: #16181b;
    background-color: #e6e6db;
    font-family: 'Open Sans', 'Noto Sans CJK SC', sans-serif;
    font-size: 14px;
  }
  button, input {
    margin: 0;
    padding: 0;
    border: 0;
    background: none;
    color: inherit;
    font: inherit;
  }
`
const Svg = styled.svg`
  display: block;
  flex: none;
  overflow: visible;
`
const Page = styled.div`
  display: flex;
  flex-direction: column;
  min-height: 100vh;
  overflow: hidden;
`
const Title = styled.header`
  display: flex;
  height: 38px;
  overflow: hidden;
  background-color: #d9dce1;
  border-bottom: 1px solid #7c7f84;
`
const MenuArea = styled.div`
  display: flex;
  flex: none;
  align-items: center;
  width: 524px;
  padding: 0 6px 10px 4px;
  border-right: 1px solid #7c7f84;
`
const Logo = styled.div`
  display: flex;
  align-items: center;
  gap: 3px;
  width: 140px;
  height: 22px;
  padding-bottom: 2px;
`
const Brand = styled.span`
  color: #d9382f;
  font-size: 13px;
  font-style: italic;
  line-height: 18px;

  b {
    font-weight: 800;
  }
`
const Menu = styled.nav`
  display: flex;
  flex: 1;
  gap: 15px;
`
const MenuItem = styled.button`
  line-height: 20px;
  white-space: nowrap;
`
const Quick = styled.div`
  display: flex;
  flex: 1;
  padding-left: 17px;
`
const QuickButton = styled.button`
  display: flex;
  flex: none;
  justify-content: center;
  width: ${p => p.$w}px;
  height: 35px;
  ${p => p.$pressed && `
    background-color: #a9abad;
    border: 1px solid #808388;
    border-top: 0;
  `}
`
const QuickCaret = styled.button`
  display: flex;
  flex: none;
  justify-content: center;
  width: 20px;
  height: 35px;
  padding-top: 10px;
  ${p => p.$framed && `
    border: 1px solid #808388;
    border-width: 0 1px 1px 0;
  `}
`
const RibbonBar = styled.div`
  display: flex;
  height: 117px;
  overflow: hidden;
  background-color: #d8dbe1;
`
const Group = styled.div`
  display: flex;
  flex: none;
  margin-bottom: 2px;
  border-right: 1px solid #c1c4c9;
`
const BigButton = styled.button`
  display: flex;
  flex-direction: column;
  align-items: center;
  width: ${p => p.$narrow ? 45 : 53}px;
  padding-top: ${p => p.$high ? 6 : 13}px;
  padding-bottom: 9px;
`
const BigLabel = styled.span`
  display: flex;
  flex-direction: column;
  padding-top: 2px;
  line-height: 19px;
  text-align: center;
  white-space: nowrap;
`
const CaretSlot = styled.span`
  margin-top: auto;
`
const Stacks = styled.div`
  display: flex;
  gap: 16px;
  padding: 0 11px 0 6px;

  button + & {
    padding-left: 12px;
  }
`
const Stack = styled.div`
  display: flex;
  flex-direction: column;
`
const SmallButton = styled.button`
  display: flex;
  align-items: center;
  gap: 6px;
  height: 38px;
  white-space: nowrap;

  &:disabled {
    color: #989ba0;
  }
`
const IconSlot = styled.span`
  flex: none;
  width: ${p => p.$wide ? 30 : 28}px;
`
const TabLine = styled.div`
  display: flex;
  height: 29px;
`
const Tabs = styled.div`
  display: flex;
  flex: none;
`
const Tab = styled.button`
  min-width: 56px;
  padding: 0 10px 2px 9px;
  border: 1px solid #838589;
  border-left: 0;
  background-color: #a9aaad;
  color: #292b2e;
  font-family: Roboto, 'Noto Sans CJK SC', sans-serif;
  font-size: 16px;
  line-height: 24px;
  white-space: nowrap;

  &:first-child {
    padding: 0 8px 2px;
  }
  ${p => p.$active && `
    background-color: #dcdee5;
    border-color: #dcdee5;
    color: #4b4e53;
  `}
`
const TopRuler = styled.div`
  flex: 1;
  height: 25px;
  padding: 3px 0;
  background-color: #c9cdd1;
  border-top: 1px solid #8e9095;
  border-bottom: 1px solid #000;
`
const RulerBand = styled.div`
  height: 17px;
  background-color: #e6e6db;
  border: 1px solid #000;
  border-width: 1px 0;
`
const Main = styled.main`
  display: flex;
  flex: 1;
`
const SideRuler = styled.div`
  display: flex;
  flex: none;
  flex-direction: column;
  align-items: center;
  gap: 380px;
  width: 17px;
  margin: 0 4px 0 2px;
  padding-top: 129px;
  border: 1px solid #000;
  border-width: 0 1px;
  box-shadow: -2px 0 #c3c8cc, 3px 0 #c3c8cc, 4px 0 #000;
`
const Tick = styled.i`
  width: 4px;
  height: 1px;
  background-color: #000;
`
const Panel = styled.aside`
  position: relative;
  flex: none;
  width: 231px;
  padding-top: 1px;
  background-color: #d7dae0;
  border-right: 1px solid #83868b;
`
const Grip = styled.div`
  display: flex;
  justify-content: center;
  height: 21px;
  margin-right: 3px;
  padding-top: 6px;
  border: 1px solid #6d7084;
  border-width: 1px 0;
`
const Dot = styled.i`
  width: 6px;
  height: 6px;
  border: 1px solid #8b8e94;
  border-radius: 50%;
`
const PanelTabs = styled.div`
  display: flex;
  height: 38px;
  margin: 4px 3px 0 0;
  padding-left: 1px;
  border-bottom: 1px solid #9da0a6;
`
const PanelTab = styled.button`
  display: flex;
  align-items: center;
  justify-content: center;
  width: 52px;
  border-top: 1px solid #83868b;
  background-color: ${p => p.$active ? '#a9abae' : 'transparent'};
`
const Expand = styled.button`
  display: flex;
  align-items: center;
  margin: 0 5px 0 auto;
  padding-bottom: 2px;
`
const Filter = styled.label`
  display: flex;
  align-items: center;
  gap: 6px;
  height: 32px;
  margin: 0 6px 0 5px;
  padding-left: 2px;
  background-color: #eeeeef;
  border: 1px solid #c3c5ca;
`
const FilterInput = styled.input`
  flex: 1;
  min-width: 0;
  height: 28px;
  outline: none;
`
const Tree = styled.ul`
  margin: 0;
  padding: 0;
  list-style: none;
`
const Row = styled.li`
  display: flex;
  align-items: center;
  height: 24px;
  padding-left: ${p => p.$level ? p.$level * 23 - 20 : 1}px;
`
const Arrow = styled.span`
  display: flex;
  flex: none;
  justify-content: center;
  width: 16px;
  margin-right: 5px;
`
const Node = styled.button`
  display: flex;
  align-items: center;
  gap: 5px;
  height: 24px;
  padding: 0 4px 0 2px;
  border: 1px solid ${p => p.$selected ? '#5293bd' : 'transparent'};
  background-color: ${p => p.$selected ? '#a7c9e3' : 'transparent'};
  font-family: 'Noto Sans', 'Noto Sans CJK SC', sans-serif;
  font-size: 15px;
  line-height: 22px;
  white-space: nowrap;
`
const NodeIcon = styled.span`
  display: flex;
  flex: none;
  justify-content: center;
  width: 18px;
`
const SideHandle = styled.div`
  position: absolute;
  top: 359px;
  right: -12px;
  z-index: 1;
  display: flex;
  align-items: center;
  width: 12px;
  height: 49px;
  padding-left: 2px;
  background-color: #d7dae0;
  border: 1px solid #83868b;
  border-left: 0;
`
const Canvas = styled.section`
  position: relative;
  flex: 1;
  min-width: 0;
  padding: 114px 17px 0 164px;
  background-color: #e6e6db;
`
const ViewTools = styled.div`
  position: absolute;
  top: 4px;
  right: 0;
  display: flex;
  align-items: center;
  gap: 10px;
`
const ToolButton = styled.button`
  width: ${p => p.$clip ? 16 : 28}px;
  height: 28px;
  overflow: ${p => p.$clip ? 'hidden' : 'visible'};
`
const StyleCaret = styled.span`
  margin: 0 -2px;
`
const Sheet = styled.svg`
  display: block;
  width: 100%;
`
const Watermark = styled.div`
  position: absolute;
  right: 28px;
  bottom: 24px;
  color: #fbfbf8;
  font-family: 'Noto Sans CJK SC', sans-serif;
  font-size: 30px;
  line-height: 44px;
  text-shadow: 1px 2px 1px #9a9a92;
  white-space: nowrap;

  span {
    margin-right: 4px;
    font-size: 32px;
  }
`

export default App
